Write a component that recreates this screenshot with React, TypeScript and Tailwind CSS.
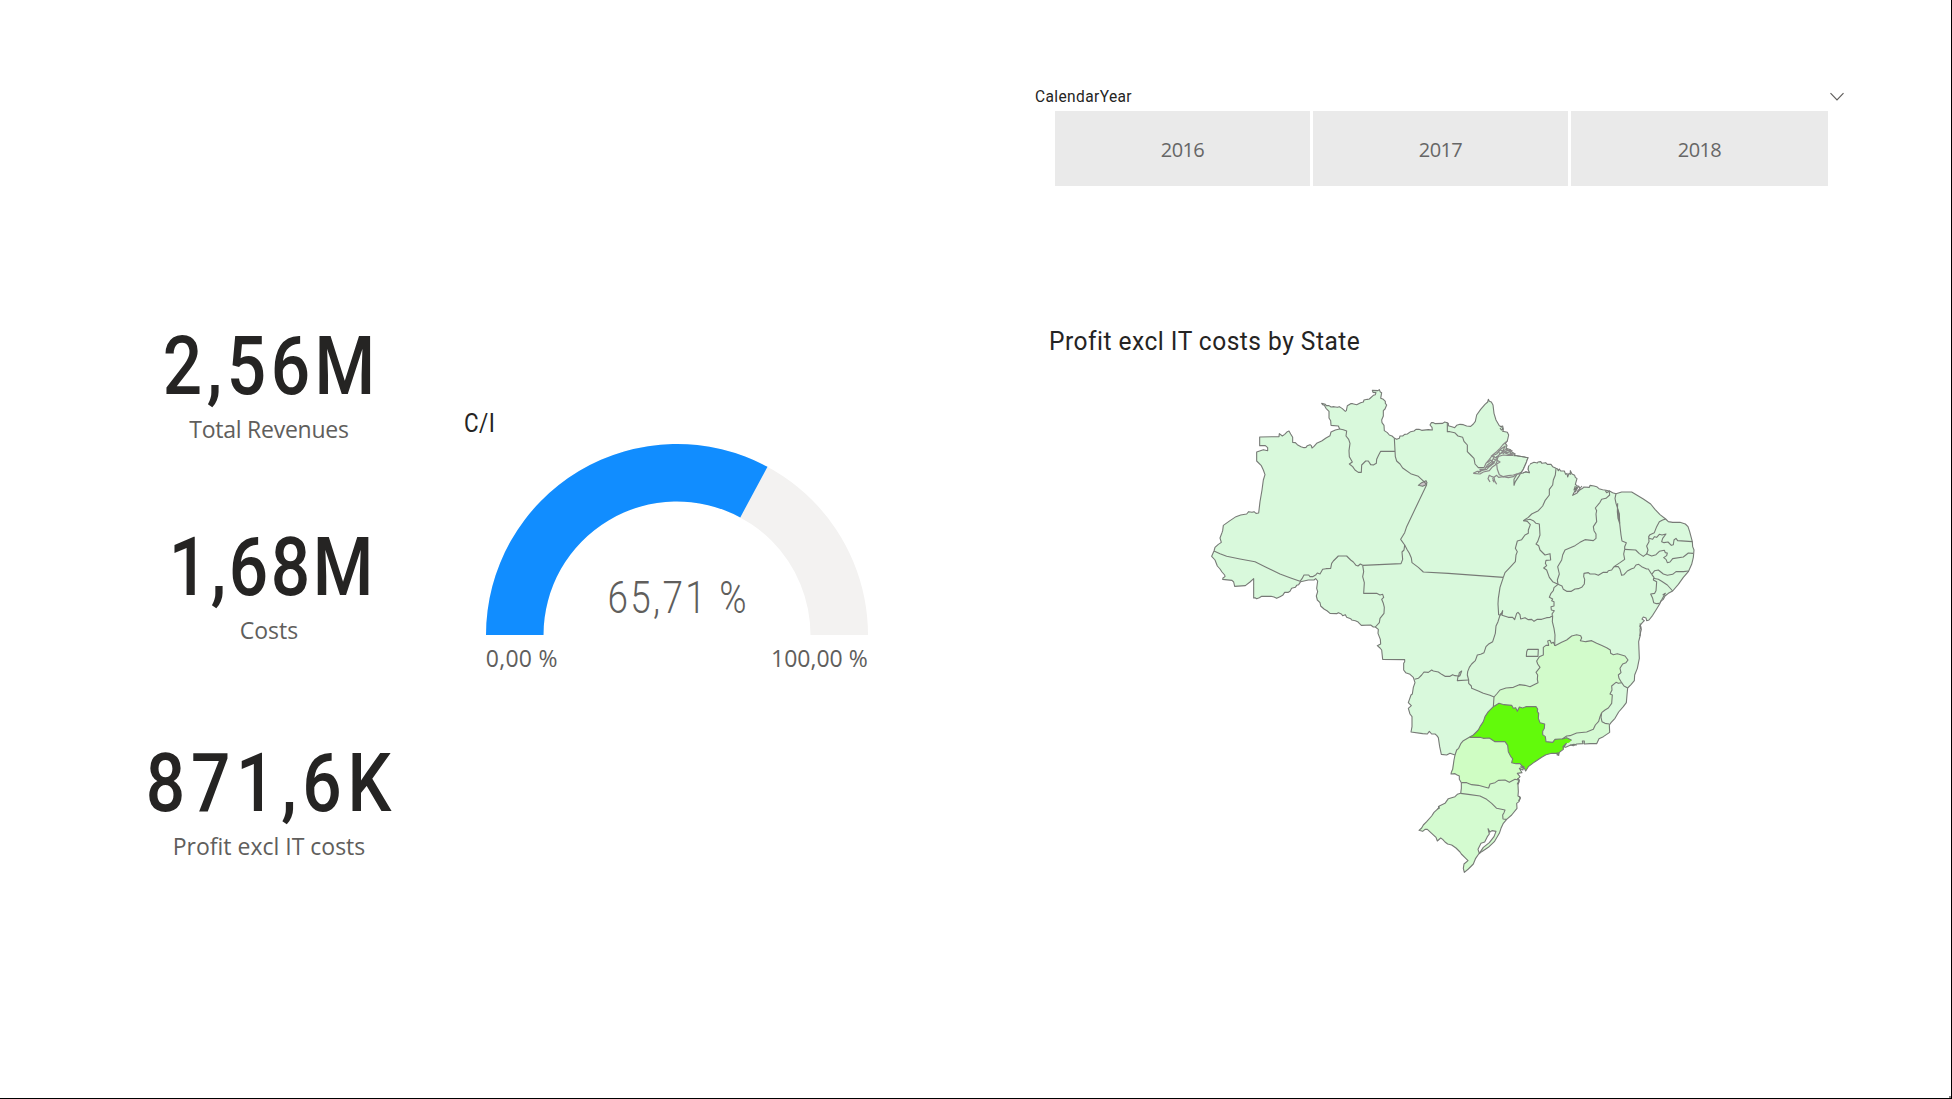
import React from "react";
import clsx from "clsx";

/* ---------- Map geometry ----------
   Points are written as "x y x y ..." in the local coordinates of one of four
   survey sheets; each helper shifts them into the shared 1500×1500 map space. */

type Pt = [number, number];

const sheet = (dx: number, dy: number) => (s: string): Pt[] => {
  const n = s.trim().split(/\s+/).map(Number);
  const out: Pt[] = [];
  for (let i = 0; i + 1 < n.length; i += 2) out.push([n[i] + dx, n[i + 1] + dy]);
  return out;
};
const nw = sheet(0, 0);
const ne = sheet(750, 0);
const sw = sheet(0, 540);
const se = sheet(600, 540);

const line = (p: Pt[]) => "M" + p.map(([x, y]) => `${x} ${y}`).join("L");
const area = (...parts: Pt[][]) => line(parts.flat()) + "Z";
const rev = (p: Pt[]) => [...p].reverse();

const outline = [
  nw(`42 513 45 502 55 493 64 487 60 474 66 458 68 452 70 436 90 422 108 410 122 405 140 402 146 395 156 397 162 395
    168 400 176 399 180 365 186 330 190 300 195 284 190 270 184 257 170 243 170 216 190 209 203 212 203 203 196 197
    179 197 179 171 237 170 238 161 247 168 254 163 262 155 267 153 272 162 278 172 278 187 286 188 292 194 303 200 312 203 318 202
    322 197 330 194 334 197 336 204 342 199 350 190 365 183 378 174 390 167 393 156 406 150 419 147 415 138 393 136
    392 122 387 114 387 94 378 85 373 76 368 74 365 70 376 73 379 77 387 77 393 81 402 80 412 82 418 80 427 86 436 94 439 92 442 77 452 71 458 71
    470 74 482 68 490 66 492 60 502 58 508 57 520 46 526 44 528 38 519 37 517 31 534 32 538 29 541 36 545 38 542 55 550 58 556 64 556 70 560 75
    555 87 550 92 550 108 545 120 546 128 552 136 553 152 562 158 568 165 576 168 584 175 590 178 598 175 600 168 608 168 614 163 622 162 632 155 642 153 648 148
    657 148 665 151 685 149 697 150 696 142 690 135 694 128 700 128 706 131 728 130 734 126 742 128`),
  ne(`-5 130 -5 137 8 141 14 143 20 136 30 133 40 134 50 138 62 139 70 132 76 124 80 105 92 88 105 73 113 66 115 58
    118 64 124 66 129 75 132 100 138 120 148 137 155 140 160 150 158 154 172 157 176 165 172 183 166 190 171 197 168 205
    182 209 183 214 195 222 192 227 200 227 234 233 228 250 220 268 212 280 206 290 196 305 192 316 192 298 201 283
    218 279 228 275 238 278 234 268 236 257 242 251 252 247 262 249 264 246 272 245 276 250 287 248 292 253 303 253 308 260 318 265
    322 266 325 272 328 267 332 273 343 273 347 283 351 280 353 291 357 280 361 283 361 272 366 282 374 286 376 292 381 296
    376 313 382 318 376 330 368 346 380 340 388 331 398 325 401 321 418 322 420 316 432 318 440 320 447 326 458 329 468 331 480 334 488 338 498 341
    515 336 545 336 560 345 580 357 602 372 615 388 630 404 647 417 655 425 668 427 690 427 706 432 714 440 719 455
    727 485 728 500 732 510 730 532 725 553 715 575 700 592 685 613 668 633 655 640 645 648 640 658 633 663 629 672
    618 690 608 706 597 720 590 722 588 714 580 711 576 717 583 722 577 728 569 738 572 745`),
  se(`722 200 720 208 721 225 716 245 717 270 718 295 712 325 704 345 703 362 693 374 683 384 681 405 679 428 670 440 656 456
    645 475 633 488 628 495 629 517 610 530 597 536 590 551 570 551 553 552 553 543 547 543 549 551 530 552 520 557 512 555 497 562 492 560
    499 550 489 560 490 568 478 577 476 585 468 580 455 580 438 584 425 592 405 605 385 620 377 633 373 625 370 620 369 630 358 625
    366 638 352 640 360 650 353 658 358 662 354 675 355 695 354 708 361 712 357 725 350 730 351 745 335 765 320 778 310 790
    303 805 298 820 283 845 265 862 245 875 236 882 227 895 220 912 205 927 193 937 190 925 192 912 204 902 195 893 184 882 180 876
    168 864 155 855 143 852 135 846 128 838 122 834 112 843 108 832 95 820 82 808 75 808 68 814 57 811 65 804 70 795 80 785 95 768
    102 757 115 745 118 738 135 730 145 716 165 710 172 703 182 700 184 685 184 668 178 658 178 648 170 644 165 641 153 642 154 637 158 628 162 600
    165 585 150 580 140 585 124 583 119 560 115 533 110 526 105 522 95 522 88 514 82 522 68 521 33 516 36 500 36 470 30 462 25 445 34 437
    25 428 33 405 37 402 40 382 45 368 40 352 30 343 17 338 11 330 11 310 14 305 14 299`),
  sw(`548 298 545 270 540 264 532 257 542 252 541 238 534 220 535 208 526 201 520 201 512 195 484 196 478 190 473 185
    466 182 455 180 452 176 440 172 436 164 428 167 424 162 415 158 410 161 390 160 382 153 372 147 362 138 360 128 352 120 349 108
    353 95 350 85 353 63 347 56 342 60 325 60 302 65 296 74 290 76 286 82 275 85 270 94 265 97 254 97 248 106 240 110 230 115 222 111 213 109
    185 109 178 113 170 116 165 113 161 114 161 56 150 66 136 77 104 79 101 66 96 61 68 58 69 54 75 50 74 45 66 36 60 27 52 18 45 0 35 -11`),
];

const mgWest = se("282 411 290 402 300 390 318 384 340 382 358 374 375 376 390 380 402 374 414 368 412 358 413 345 408 337 420 322 413 312 410 303 418 290 430 285 430 262 438 256 446 256 443 243 450 241 454 250 460 247 465 257");
const mgNorth = se("465 257 485 247 500 240 515 228 530 224 542 227 545 234 541 242 557 245 575 242 590 250 604 256 620 263 631 270 632 280 640 284 652 281 665 285 675 288 684 300 678 308 668 312 660 325 663 338 655 345 657 355 665 368");
const mgEs = se("665 368 655 370 648 367 635 378 636 390 630 402 637 405 635 430 625 444 615 450 605 458");
const mgRj = se("605 458 600 470 596 484 586 495 580 508 560 516 530 519 510 527 500 528 487 537");
const spNorth = se("280 440 297 430 312 434 335 436 340 445 347 443 352 454 358 441 368 444 378 440 408 440 413 447 412 455 416 460 415 475 420 488 434 492 433 505 428 514 428 524 436 530 438 545 458 547 465 538 480 537 487 537");
const spEast = se("487 537 500 533 515 541 507 548 499 550 490 568 478 577 476 585 468 580 455 580 438 584 425 592 405 605 385 620 377 633 373 622");
const prNorth = se("208 532 240 532 250 535 268 534 285 545 315 545 323 556 325 575 330 585 334 592 338 596 335 608 348 611 360 611 366 618 373 622");
const spWest = se("282 411 280 440 265 455 255 470 250 485 240 500 235 510 220 525 208 532");
const prWest = se("208 532 190 542 183 550 176 565 170 570 165 585");
const prSouth = se("184 668 200 668 215 674 235 676 262 683 266 684 270 672 285 668 295 661 315 660 328 667 345 658 355 660");
const rsNorth = se("182 700 205 703 240 708 260 718 275 730 290 745 315 750 312 758 308 765 309 777 320 778");
const scCoast = se("355 660 354 675 355 695 354 708 361 712 357 725 350 730 351 745 335 765 320 778");
const goWest = se("302 160 298 172 294 185 288 198 286 220 278 245 265 253 258 260 252 278 242 283 232 285 226 302 215 312 208 322 203 335 202 345 206 360 206 370 214 378 215 385 235 393 250 400 270 406 282 411");
const toSouth = ne("146 705 152 705 158 692 156 706 175 712 188 712 194 719 200 700 204 697 210 704 212 717 225 713 235 719 245 718 252 724 262 718 275 718 290 713 300 712 308 707");
const goEast = ne("308 707 307 725 312 745 315 765 314 797");

const borders: Pt[][] = [
  nw("42 513 60 521 80 529 120 537 165 545 195 560 240 582 270 593 300 604"),
  nw("300 604 306 596 312 585 326 585 330 590 338 590 348 584 352 579 360 582 368 568 378 566 392 565 395 550 400 543 415 528 440 528 452 540 460 546 468 556 474 558 481 552 488 556"),
  nw("488 556 603 551 608 538 606 516 612 510 614 495 602 478 614 458 620 440 680 314 672 305 655 289 632 281 608 264 600 252 590 243 586 230 583 175"),
  nw("419 147 430 149 440 153 438 168 446 178 450 190 447 212 448 230 457 246 448 252 458 260 465 270 475 277 484 277 485 255 497 243 505 243 512 254 520 255 529 250 530 238 536 225 542 214 585 214"),
  nw("488 556 491 575 488 590 493 608 491 640 530 640 540 645 548 643 551 652 545 658 550 670 553 682 552 700 540 715 538 728 526 741"),
  nw("614 495 622 510 628 520 634 534 636 548 655 562 670 576 745 580 910 592"),
  ne("-8 128 -8 155 0 155 14 158 24 168 38 172 42 184 52 195 52 215 62 225 72 235 75 252 85 263 102 263"),
  ne("160 592 165 578 180 562 196 545 198 525 202 515 196 505 202 483 215 479 225 465 235 460 235 450 241 434 232 424 220 422"),
  ne("160 592 150 622 145 655 144 672 146 705"),
  ne("318 265 316 285 310 300 308 315 298 328 298 345 285 362 278 378 265 392 245 402 235 412 220 422"),
  ne("220 422 240 418 250 422 258 430 268 432 270 465 263 485 258 492 266 497 270 510 285 525 300 521 302 540 288 541 286 550 290 557 281 564 290 570 298 592 308 605 324 613"),
  ne("478 336 479 345 468 355 455 358 450 367 436 384 440 392 438 402 440 425 430 440 432 452 438 462 438 475 430 482 405 479 390 487 375 497 345 510 338 525 335 540 323 560 328 582 322 600 324 613"),
  ne("498 341 495 355 498 370 503 385 508 402 509 430 513 465 516 483 529 488 524 500 524 508"),
  ne("503 370 502 395 504 415 509 430 506 400 502 385"),
  ne("524 508 521 522 524 538 510 548 492 560"),
  ne("524 508 557 510 568 521 580 529 592 520"),
  ne("647 417 638 420 628 425 620 440 613 458 600 464 596 470 597 485 590 498 594 510 590 522 592 523"),
  ne("597 475 608 478 613 470 620 472 628 463 636 465 648 462 638 475 635 485 642 488 654 486 664 496 670 494 672 480 678 475 683 482 727 485"),
  ne("592 523 605 528 618 524 628 514 643 511 646 518 652 519 650 527 641 533 648 538 652 548 660 546 668 536 700 531 715 519 729 520"),
  ne("492 560 505 560 510 568 515 586 522 584 532 573 545 566 552 564 558 555 566 553 575 560 590 567 595 567 605 583"),
  ne("605 583 614 572 625 570 640 582 652 586 668 583 678 575 700 575 715 573"),
  ne("610 595 625 598 635 604 652 615 668 633"),
  ne("605 583 612 592 610 600 620 605 618 632 614 640 602 642 608 655 611 668 620 671 629 670"),
  ne("492 560 485 570 475 572 472 577 460 577 445 586 435 582 420 582 415 578 402 580 401 590 404 598 403 612 395 622 385 626 375 627 364 634 350 634 340 628 336 618 324 613"),
  ne("324 613 312 623 310 632 303 640 298 652 308 657 305 662 312 665 312 678 303 680 304 690 313 692 306 702 308 707"),
  toSouth,
  goEast,
  goWest,
  se("206 360 172 362 174 350 180 347 185 333 178 338 176 348 165 347 158 344 150 349 135 349 125 343 115 336 100 333 95 330 85 337 72 336 65 345 55 355 44 358"),
  spWest,
  prWest,
  mgWest,
  mgNorth,
  mgEs,
  mgRj,
  spNorth,
  prNorth,
  prSouth,
  rsNorth,
  se("487 537 500 533 515 541"),
  se("665 368 672 378 683 384"),
  se("605 458 603 472 606 485 615 490 628 492"),
  se("383 268 415 268 414 289 379 289 380 275 383 268"),
];

/* Channels and islets of the Amazon mouth. */
const delta: Pt[][] = [
  ne("102 263 108 250 118 238 128 225 140 215 150 205 158 195 168 186 172 183"),
  ne("70 280 82 274 92 275 90 268 104 268 112 255 125 245 132 232 124 228 140 222 150 210 158 213 166 198 156 205 146 213"),
  ne("70 280 90 282 100 276 118 272 126 262 136 255 142 242 140 230 150 228 160 225 172 226 190 226"),
  ne("112 248 122 240 132 250 120 258 110 262 124 252 138 240 130 236"),
  ne("130 228 138 234 150 222 162 215 172 218 182 214 170 208 160 212 150 222 146 216"),
  ne("158 222 170 212 186 212 180 220 195 222 178 224 165 219"),
  ne("84 278 96 271 110 268 122 256 134 246"),
  ne("146 228 140 240 150 246 140 252 142 268 148 284 160 290 175 287 190 285 205 281 214 277"),
  ne("120 306 114 296 118 286 126 290 132 292 140 286 146 292 160 290 175 293 190 290 200 282"),
  ne("132 292 134 302 140 313"),
  ne("128 294 132 306 128 300"),
];

const coastBits: Pt[][] = [
  ne("376 318 372 330 380 322 376 336 386 318 390 326 382 334 396 318"),
  ne("150 140 158 138 160 147 154 150 150 144"),
  se("788 105 796 100 786 118 780 128"),
  se("720 190 724 208 719 228"),
  se("510 556 522 553 530 556"),
  se("470 580 474 578 476 586 470 584"),
  se("352 655 358 660 352 672 358 664"),
  se("357 708 361 716 355 722"),
  se("360 620 370 624 364 616 374 626"),
  se("115 738 118 745 112 747"),
  ne("466 332 470 338 480 332"),
];

const lagoon = se("264 806 270 816 276 812 288 814 282 830 268 848 250 862 238 880 234 868 243 850 254 846 262 830 268 822");
const reservoir = nw("655 316 665 308 678 302 681 308 678 314 668 319");
const marajoBay = ne("234 233 240 252 236 257 234 268 238 276 228 274 212 280 220 268 228 250");

function BrazilMap() {
  return (
    <svg viewBox="0 0 1500 1500" className="mt-[22px] ml-[165px] block h-[500px] w-[500px]" fill="none" strokeLinejoin="round">
      <path d={area(...outline)} fill="#d9f9dc" />
      <path d={area(goWest, mgWest, rev(goEast), rev(toSouth))} fill="#d8f8da" />
      <path d={area(mgWest, mgNorth, mgEs, mgRj, rev(spNorth))} fill="#d2fbcb" />
      <path d={area(mgRj, se("515 541 500 552 520 554 549 551 590 551 597 536 610 530 629 517 628 492 606 485"))} fill="#d5fad3" />
      <path
        d={area(rev(prWest), prNorth, se("370 630 358 625 366 638 352 640 360 650 355 660"), rev(prSouth), se("178 648 165 641 153 642 162 600"))}
        fill="#cffdc3"
      />
      <path d={area(prSouth, scCoast, rev(rsNorth))} fill="#d4fbd0" />
      <path
        d={area(
          rsNorth,
          se("310 790 303 805 298 820 283 845 265 862 245 875 236 882 227 895 220 912 205 927 193 937 190 925 192 912 204 902 195 893 180 876 155 855 135 846 122 834 112 843 108 832 95 820 82 808 68 814 57 811 70 795 95 768 115 745 135 730 145 716 165 710"),
        )}
        fill="#d4fbd0"
      />
      <path d={area(spWest, prNorth, rev(spEast), rev(spNorth))} fill="#62fa0b" />
      <path d={area(lagoon)} fill="#ffffff" />
      <path d={area(reservoir)} fill="#c9c3c6" />
      <g stroke="#777a76" strokeWidth="3.3">
        <path d={area(...outline)} />
        <path d={area(lagoon)} />
        <path d={area(reservoir)} />
        {[...borders, ...coastBits].map((b, i) => (
          <path key={i} d={line(b)} />
        ))}
      </g>
      <g stroke="#8a8888" strokeWidth="3.6">
        {delta.map((b, i) => (
          <path key={i} d={line(b)} />
        ))}
      </g>
      <path d={area(marajoBay)} fill="#ffffff" />
      <g stroke="#777a76" strokeWidth="3.3">
        <path d={line(ne("200 227 234 233 228 250 220 268 212 280"))} />
        <path d={line(ne("218 279 228 275 238 278 234 268 236 257"))} />
      </g>
    </svg>
  );
}

/* ---------- Cards ---------- */

function Kpi({ value, label, valueClass, labelClass }: { value: string; label: string; valueClass: string; labelClass?: string }) {
  return (
    <div className="flex w-full flex-col items-center">
      <div
        className={clsx(
          "h-[80px] scale-x-[0.85] font-['Roboto',sans-serif] text-[81.6px] leading-[80px] font-medium whitespace-nowrap text-[#252423]",
          valueClass,
        )}
      >
        {value}
      </div>
      <div className={clsx("mt-[7px] h-8 font-['Open_Sans',sans-serif] text-[23px] leading-8 whitespace-nowrap text-[#605e5c]", labelClass)}>{label}</div>
    </div>
  );
}

function Gauge({ fraction }: { fraction: number }) {
  const cx = 191;
  const outer = 191;
  const inner = 133.5;
  const at = (r: number, f: number) => `${cx - r * Math.cos(Math.PI * f)} ${191 - r * Math.sin(Math.PI * f)}`;
  const arc = (a: number, b: number) =>
    `M${at(outer, a)}A${outer} ${outer} 0 0 1 ${at(outer, b)}L${at(inner, b)}A${inner} ${inner} 0 0 0 ${at(inner, a)}Z`;
  return (
    <section className="ml-[45px] w-[404px] pt-[407px]">
      <h2 className="h-8 origin-left scale-x-[0.88] font-['Roboto',sans-serif] text-[25.5px] leading-8 tracking-[0.5px] text-[#252423]">C/I</h2>
      <div className="relative mt-[5px] ml-[21.7px] w-[382px]">
        <svg viewBox="0 0 382 191" className="block h-[191px] w-[382px]">
          <path d={arc(0, 1)} fill="#f3f2f1" />
          <path d={arc(0, fraction)} fill="#118dff" />
        </svg>
        <div className="absolute inset-x-0 top-[130px] scale-x-[0.82] pl-[3px] text-center font-['Roboto',sans-serif] text-[45px] leading-[48px] font-light tracking-[2.8px] text-[#605e5c]">
          65,71 %
        </div>
        <div className="mt-[7px] flex justify-between font-['Open_Sans',sans-serif] text-[23px] leading-8 text-[#605e5c]">
          <span className="tracking-[0.3px]">0,00 %</span>
          <span>100,00 %</span>
        </div>
      </div>
    </section>
  );
}

function YearSlicer() {
  return (
    <div>
      <div className="flex h-5 w-[811px] items-start justify-between">
        <span className="origin-left scale-x-[0.97] font-['Roboto',sans-serif] text-[16px] leading-5 tracking-[0.4px] text-[#252423]">CalendarYear</span>
        <svg viewBox="0 0 16 10" className="mt-[5px] mr-px h-[10px] w-4" fill="none" stroke="#605e5c" strokeWidth="1.2">
          <path d="M1.5 1.2L8 7.8L14.5 1.2" />
        </svg>
      </div>
      <div className="mt-1 ml-5 grid w-[773px] grid-cols-[255px_255px_257px] gap-[3px]">
        {["2016", "2017", "2018"].map((y) => (
          <button
            key={y}
            className="flex h-[75px] items-center justify-center bg-[#eaeaea] pt-[2px] font-['Open_Sans',sans-serif] text-[20px] tracking-[-0.6px] text-[#666666]"
          >
            {y}
          </button>
        ))}
      </div>
    </div>
  );
}

export default function App() {
  return (
    <main className="relative flex h-[1099px] w-[1952px] items-start overflow-hidden border-r border-b border-black bg-white">
      <section className="ml-[119px] flex w-[300px] shrink-0 flex-col pt-[326px]">
        <Kpi value="2,56M" label="Total Revenues" valueClass="tracking-[5.3px] pl-[5px]" labelClass="tracking-[-0.25px]" />
        <div className="h-[82px]" />
        <Kpi value="1,68M" label="Costs" valueClass="tracking-[3px] pl-[7px]" />
        <div className="h-[97px]" />
        <Kpi value="871,6K" label="Profit excl IT costs" valueClass="tracking-[6.7px] pl-[5px]" />
      </section>
      <Gauge fraction={0.6571} />
      <section className="ml-[167px] w-[830px] shrink-0 pt-[87px]">
        <YearSlicer />
        <h2 className="mt-[140px] ml-[14px] h-8 origin-left scale-x-[0.97] font-['Roboto',sans-serif] text-[25.3px] leading-8 tracking-[0.5px] whitespace-nowrap text-[#252423]">
          Profit excl IT costs by State
        </h2>
        <BrazilMap />
      </section>
      <div className="absolute right-0 bottom-0 h-[2px] w-[2px] bg-[#808080]" />
    </main>
  );
}
